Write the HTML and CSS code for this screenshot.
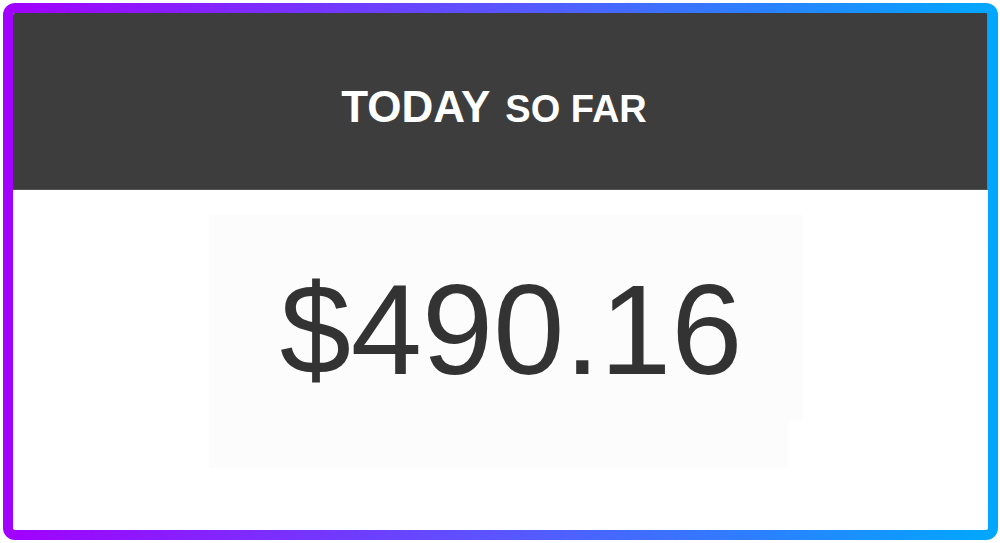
FILE: index.html
```html
<!DOCTYPE html>
<html lang="en">
<head>
  <meta charset="UTF-8" />
  <title>Today So Far</title>
  <meta name="viewport" content="width=device-width, initial-scale=1.0" />
  <link rel="stylesheet" href="styles.css">
</head>
<body>
  <div class="frame">
    <div class="panel">
      <div class="panel-header">
        <h1>TODAY<span class="sub">SO FAR</span></h1>
      </div>
      <div class="panel-body">
        <div class="amount-box">
          <p class="amount">$490.16</p>
        </div>
        <div class="amount-foot"></div>
      </div>
    </div>
  </div>
</body>
</html>
```

FILE: styles.css
```css
* {
  box-sizing: border-box;
  margin: 0;
  padding: 0;
}

body {
  font-family: "Liberation Sans", Arial, sans-serif;
  background: #ffffff;
  width: 1000px;
  height: 543px;
  overflow: hidden;
}

.frame {
  margin: 3px 0 0 3px;
  width: 995px;
  height: 537px;
  padding: 10px;
  border-radius: 12px;
  background: linear-gradient(to right, #a200ff 0%, #5a55ff 50%, #00a8ff 100%);
}

.panel {
  width: 100%;
  height: 100%;
  background: #ffffff;
  border-radius: 2px;
  overflow: hidden;
}

.panel-header {
  height: 177px;
  background: #3d3d3d;
  border-right: 1px solid #7a7a7a;
  border-bottom: 1px solid #555555;
  padding-top: 72px;
  padding-right: 12px;
  text-align: center;
}

.panel-header h1 {
  color: #ffffff;
  font-size: 44px;
  line-height: 1;
  font-weight: bold;
}

.panel-header .sub {
  font-size: 38px;
  margin-left: 15px;
}

.panel-body {
  padding-top: 25px;
  padding-left: 196px;
}

.amount-box {
  width: 594px;
  height: 205px;
  background: #fcfcfc;
  padding-top: 40px;
  text-align: center;
}

.amount {
  font-size: 128px;
  line-height: 150px;
  color: #333333;
  padding-left: 10px;
}

.amount-foot {
  width: 580px;
  height: 48px;
  background: #fcfcfc;
}
```
